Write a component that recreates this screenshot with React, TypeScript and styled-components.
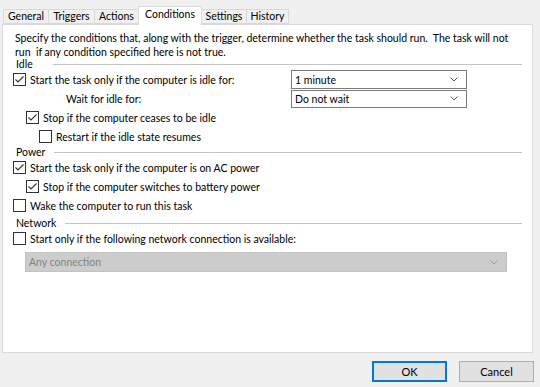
import React from 'react';
import styled, { createGlobalStyle } from 'styled-components';

const GlobalStyle = createGlobalStyle`
  html, body {
    margin: 0;
    padding: 0;
    background: #f0f0f0;
  }
  body {
    font-family: Lato, 'Open Sans', 'Liberation Sans', sans-serif;
    font-size: 10.5px;
    color: #000000;
  }
`;

const Window = styled.div`
  width: 540px;
  height: 387px;
  box-sizing: border-box;
  padding: 6px 6px 0 2px;
  display: flex;
  flex-direction: column;
  background: #f0f0f0;
`;

const TabStrip = styled.div`
  height: 18px;
  display: flex;
  align-items: flex-end;
  padding-left: 1px;
`;

const Tab = styled.div<{ $w: number; $active?: boolean }>`
  position: relative;
  z-index: ${({ $active }) => ($active ? 2 : 1)};
  box-sizing: border-box;
  width: ${({ $w }) => $w}px;
  height: ${({ $active }) => ($active ? 19 : 15)}px;
  margin-bottom: ${({ $active }) => ($active ? -1 : 0)}px;
  margin-left: -1px;
  display: flex;
  align-items: center;
  justify-content: center;
  border: 1px solid #d9d9d9;
  border-bottom: ${({ $active }) => ($active ? 'none' : '1px solid #d9d9d9')};
  background: ${({ $active }) => ($active ? '#ffffff' : '#f0f0f0')};
  line-height: 1;
  padding-bottom: ${({ $active }) => ($active ? 3 : 0)}px;
  &:first-child {
    margin-left: 0;
  }
`;

const Panel = styled.div`
  box-sizing: border-box;
  width: 531px;
  height: 329px;
  border: 1px solid #d9d9d9;
  background: #ffffff;
  padding: 6px 10px 0 10px;
  display: flex;
  flex-direction: column;
`;

const Description = styled.p`
  margin: 0;
  padding-left: 2px;
  line-height: 14px;
  width: 500px;
  white-space: pre-wrap;
`;

const GroupHeader = styled.div<{ $gap?: number }>`
  height: 12px;
  margin-top: ${({ $gap }) => $gap ?? 0}px;
  display: flex;
  align-items: center;
  gap: 9px;
  padding-left: 3px;
  line-height: 1;
  span {
    min-width: 28px;
  }
  &::after {
    content: '';
    flex: 1;
    height: 1px;
    background: #c4c4c4;
    margin-top: 1px;
  }
`;

const IdleGrid = styled.div`
  display: grid;
  grid-template-columns: 278px 176px;
  grid-auto-rows: 19px;
  align-items: center;
`;

const CheckRow = styled.label<{ $level?: number }>`
  height: 19px;
  display: flex;
  align-items: center;
  gap: 4px;
  padding-left: ${({ $level }) => ($level ?? 0) * 13}px;
  white-space: nowrap;
`;

const PlainLabel = styled.div`
  padding-left: 53px;
`;

const Box = styled.span`
  box-sizing: border-box;
  width: 13px;
  height: 13px;
  border: 1px solid #333333;
  background: #ffffff;
  display: flex;
  align-items: center;
  justify-content: center;
  flex-shrink: 0;
`;

const Select = styled.div<{ $disabled?: boolean; $w: number; $h: number }>`
  box-sizing: border-box;
  width: ${({ $w }) => $w}px;
  height: ${({ $h }) => $h}px;
  display: flex;
  align-items: center;
  justify-content: space-between;
  padding: 0 8px 0 3px;
  border: 1px solid ${({ $disabled }) => ($disabled ? '#c2c2c2' : '#7a7a7a')};
  background: ${({ $disabled }) => ($disabled ? '#cccccc' : '#ffffff')};
  color: ${({ $disabled }) => ($disabled ? '#838383' : '#000000')};
`;

const NetworkSelectWrap = styled.div`
  margin: 4px 0 0 12px;
`;

const ButtonBar = styled.div`
  display: flex;
  justify-content: flex-end;
  gap: 12px;
  margin-top: 8px;
`;

const Button = styled.button<{ $primary?: boolean }>`
  box-sizing: border-box;
  width: 75px;
  height: 21px;
  padding: 0;
  font: inherit;
  font-size: 11px;
  color: #000000;
  background: #e1e1e1;
  border: 1px solid ${({ $primary }) => ($primary ? '#0078d7' : '#adadad')};
  box-shadow: ${({ $primary }) => ($primary ? 'inset 0 0 0 1px #0078d7' : 'none')};
`;

const Check = () => (
  <svg width="11" height="11" viewBox="0 0 11 11">
    <polyline points="1.5,5.5 4,8 9.5,2.5" fill="none" stroke="#333" strokeWidth="1.1" />
  </svg>
);

const Chevron = ({ color }: { color: string }) => (
  <svg width="8" height="5" viewBox="0 0 8 5">
    <polyline points="0.5,0.5 4,4 7.5,0.5" fill="none" stroke={color} strokeWidth="1" />
  </svg>
);

const CheckBox = ({ checked, level, children }: { checked?: boolean; level?: number; children: React.ReactNode }) => (
  <CheckRow $level={level}>
    <Box>{checked && <Check />}</Box>
    <span>{children}</span>
  </CheckRow>
);

const Dropdown = ({ value, w, h, disabled }: { value: string; w: number; h: number; disabled?: boolean }) => (
  <Select $w={w} $h={h} $disabled={disabled}>
    <span>{value}</span>
    <Chevron color={disabled ? '#9a9a9a' : '#555555'} />
  </Select>
);

const tabs = [
  { label: 'General', w: 46 },
  { label: 'Triggers', w: 47 },
  { label: 'Actions', w: 45 },
  { label: 'Conditions', w: 64, active: true },
  { label: 'Settings', w: 46 },
  { label: 'History', w: 43 },
];

export default function App() {
  return (
    <>
      <GlobalStyle />
      <Window>
        <TabStrip>
          {tabs.map((t) => (
            <Tab key={t.label} $w={t.w} $active={t.active}>
              {t.label}
            </Tab>
          ))}
        </TabStrip>
        <Panel>
          <Description>
            {'Specify the conditions that, along with the trigger, determine whether the task should run.  The task will not run  if any condition specified here is not true.'}
          </Description>
          <GroupHeader $gap={-1}>
            <span>Idle</span>
          </GroupHeader>
          <IdleGrid>
            <CheckBox checked>Start the task only if the computer is idle for:</CheckBox>
            <Dropdown value="1 minute" w={176} h={19} />
            <PlainLabel>Wait for idle for:</PlainLabel>
            <Dropdown value="Do not wait" w={176} h={18} />
          </IdleGrid>
          <CheckBox checked level={1}>Stop if the computer ceases to be idle</CheckBox>
          <CheckBox level={2}>Restart if the idle state resumes</CheckBox>
          <GroupHeader>
            <span>Power</span>
          </GroupHeader>
          <CheckBox checked>Start the task only if the computer is on AC power</CheckBox>
          <CheckBox checked level={1}>Stop if the computer switches to battery power</CheckBox>
          <CheckBox>Wake the computer to run this task</CheckBox>
          <GroupHeader $gap={2}>
            <span>Network</span>
          </GroupHeader>
          <CheckBox>Start only if the following network connection is available:</CheckBox>
          <NetworkSelectWrap>
            <Dropdown value="Any connection" w={482} h={20} disabled />
          </NetworkSelectWrap>
        </Panel>
        <ButtonBar>
          <Button $primary>OK</Button>
          <Button>Cancel</Button>
        </ButtonBar>
      </Window>
    </>
  );
}
